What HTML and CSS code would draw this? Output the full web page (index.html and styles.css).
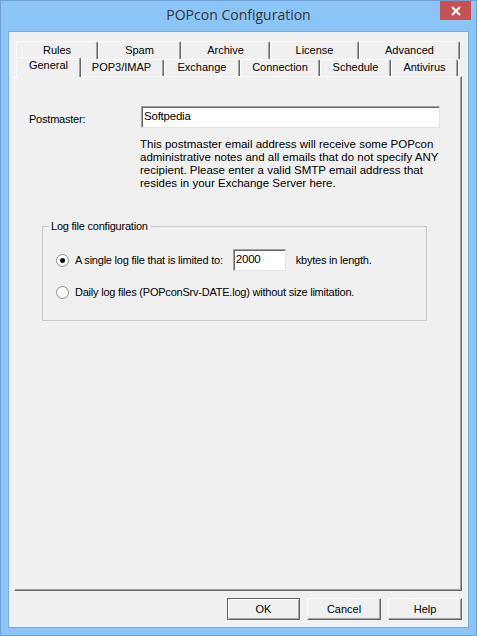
FILE: index.html
```html
<!DOCTYPE html>
<html lang="en">
  <head>
    <meta charset="UTF-8" />
    <title>POPcon Configuration</title>
    <link rel="stylesheet" href="styles.css">
  </head>
  <body>
    <div class="window">
      <div class="titlebar">
        <div class="title">POPcon Configuration</div>
        <div class="close">
          <svg width="10" height="10" viewBox="0 0 10 10">
            <path d="M1 1 L9 9 M9 1 L1 9" stroke="#fff" stroke-width="2.2" />
          </svg>
        </div>
      </div>

      <div class="client">
        <div class="tabs">
          <div class="tab-row">
            <div class="tab" style="width: 82px">Rules</div>
            <div class="tab" style="width: 83px">Spam</div>
            <div class="tab" style="width: 89px">Archive</div>
            <div class="tab" style="width: 89px">License</div>
            <div class="tab" style="width: 101px">Advanced</div>
          </div>
          <div class="tab-row front">
            <div class="tab selected" style="width: 65px">General</div>
            <div class="tab" style="width: 85px">POP3/IMAP</div>
            <div class="tab" style="width: 76px">Exchange</div>
            <div class="tab" style="width: 80px">Connection</div>
            <div class="tab" style="width: 71px">Schedule</div>
            <div class="tab" style="width: 67px">Antivirus</div>
          </div>
        </div>

        <div class="panel">
          <div class="field-row">
            <label class="field-label">Postmaster:</label>
            <div class="textbox wide">Softpedia</div>
          </div>
          <p class="note">
            This postmaster email address will receive some POPcon<br />
            administrative notes and all emails that do not specify ANY<br />
            recipient. Please enter a valid SMTP email address that<br />
            resides in your Exchange Server here.
          </p>

          <fieldset class="group">
            <legend>Log file configuration</legend>
            <div class="radio-row first">
              <span class="radio checked"></span>
              <span>A single log file that is limited to:</span>
              <div class="textbox small">2000</div>
              <span class="unit">kbytes in length.</span>
            </div>
            <div class="radio-row">
              <span class="radio"></span>
              <span>Daily log files (POPconSrv-DATE.log) without size limitation.</span>
            </div>
          </fieldset>
        </div>

        <div class="buttons">
          <button class="btn default">OK</button>
          <button class="btn">Cancel</button>
          <button class="btn">Help</button>
        </div>
      </div>
    </div>
  </body>
</html>
```

FILE: styles.css
```css
body {
  margin: 0;
  font-family: "Liberation Sans", Arial, sans-serif;
  font-size: 11px;
  color: #000;
}
.window {
  width: 477px;
  height: 636px;
  box-sizing: border-box;
  border: 1px solid #6f9fd0;
  background-color: #8bc5f8;
}
.titlebar {
  display: flex;
  height: 30px;
}
.title {
  flex: 1;
  text-align: center;
  padding-left: 36px;
  padding-top: 4px;
  font-family: "Open Sans", sans-serif;
  font-size: 14px;
  color: #333;
}
.close {
  width: 31px;
  height: 19px;
  margin-right: 5px;
  background-color: #c75050;
  display: flex;
  align-items: center;
  justify-content: center;
}
.client {
  margin-left: 7px;
  width: 461px;
  height: 597px;
  box-sizing: border-box;
  border: 1px solid #78acdf;
  background-color: #f0f0f0;
  padding-top: 9px;
}
.tabs {
  padding-left: 7px;
}
.tab-row {
  display: flex;
  height: 18px;
}
.tab-row.front {
  height: 17px;
  position: relative;
  z-index: 2;
}
.tab {
  box-sizing: border-box;
  border-top: 1px solid #fff;
  border-left: 1px solid #fff;
  border-right: 1px solid #696969;
  box-shadow: inset -1px 0 #a0a0a0;
  border-radius: 2px 2px 0 0;
  background-color: #f0f0f0;
  text-align: center;
  line-height: 16px;
}
.tab-row.front .tab {
  line-height: 15px;
}
.tab.selected {
  height: 20px;
  margin: -2px -2px 0 0;
  line-height: 17px;
  position: relative;
  z-index: 3;
}
.panel {
  margin-left: 5px;
  width: 448px;
  height: 515px;
  box-sizing: border-box;
  border-top: 1px solid #fff;
  border-left: 1px solid #fff;
  border-right: 1px solid #696969;
  border-bottom: 1px solid #696969;
  box-shadow: inset -1px -1px #a0a0a0;
  padding: 29px 0 0 14px;
  letter-spacing: -0.22px;
}
.field-row {
  display: flex;
  align-items: center;
  padding-top: 1px;
}
.field-label {
  width: 112px;
  padding-top: 3px;
}
.textbox {
  box-sizing: border-box;
  height: 22px;
  background-color: #fff;
  border-top: 1px solid #a0a0a0;
  border-left: 1px solid #a0a0a0;
  border-right: 1px solid #e3e3e3;
  border-bottom: 1px solid #e3e3e3;
  box-shadow: inset 1px 1px #696969;
  padding: 3px 0 0 2px;
  font-size: 11.5px;
}
.field-row .textbox {
  margin-top: -1px;
}
.textbox.wide {
  width: 299px;
}
.textbox.small {
  width: 53px;
  margin-left: 10px;
}
.note {
  margin: 10px 0 0 111px;
  line-height: 13px;
  font-size: 11.5px;
  letter-spacing: 0;
  white-space: nowrap;
}
.group {
  margin: 30px 0 0 13px;
  width: 385px;
  box-sizing: border-box;
  border: 1px solid #c8c8c8;
  padding: 0 0 17px 13px;
}
.group legend {
  margin-left: -7px;
  padding: 0 2px;
  line-height: 13px;
}
.radio-row {
  display: flex;
  align-items: center;
  height: 22px;
  margin-top: 10px;
}
.radio-row.first {
  margin-top: 16px;
}
.radio {
  width: 13px;
  height: 13px;
  box-sizing: border-box;
  border-radius: 50%;
  border: 1px solid #8e8f8f;
  background-color: #fff;
  margin-right: 6px;
  display: flex;
  align-items: center;
  justify-content: center;
}
.radio.checked::after {
  content: "";
  width: 5px;
  height: 5px;
  border-radius: 50%;
  background-color: #111;
}
.unit {
  margin-left: 10px;
}
.buttons {
  display: flex;
  justify-content: flex-end;
  gap: 7px;
  margin-top: 7px;
  padding-right: 6px;
}
.btn {
  width: 74px;
  height: 22px;
  box-sizing: border-box;
  font-family: "Liberation Sans", Arial, sans-serif;
  font-size: 11px;
  color: #000;
  background-color: #f0f0f0;
  border-top: 1px solid #fff;
  border-left: 1px solid #fff;
  border-right: 1px solid #696969;
  border-bottom: 1px solid #696969;
  box-shadow: inset -1px -1px #a0a0a0;
  padding: 0;
}
.btn.default {
  width: 73px;
  border: 1px solid #646464;
  box-shadow: inset 1px 1px #fff, inset -1px -1px #a0a0a0;
}
```
